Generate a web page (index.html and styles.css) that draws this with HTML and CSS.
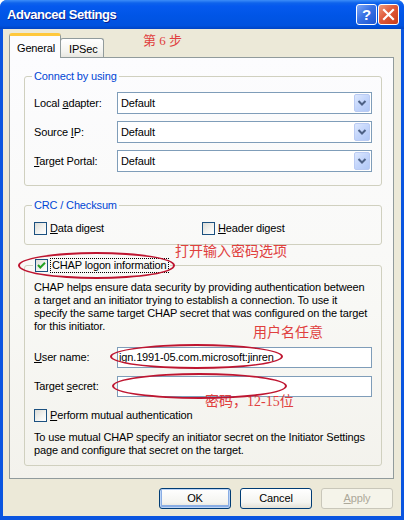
FILE: index.html
```html
<!DOCTYPE html>
<html lang="en">
<head>
<meta charset="utf-8">
<title>Advanced Settings</title>
<link rel="stylesheet" href="styles.css">
</head>
<body>
<div class="window">
  <div class="titlebar">
    <span class="caption">Advanced Settings</span>
    <span class="tb help">?</span>
    <span class="tb close"><svg width="19" height="19" viewBox="0 0 19 19"><path d="M5 5 L14 14 M14 5 L5 14" stroke="#fff" stroke-width="2.2" stroke-linecap="square"/></svg></span>
  </div>

  <div class="client">
    <div class="tabs">
      <div class="tab active">General</div>
      <div class="tab">IPSec</div>
    </div>

    <div class="page">
      <fieldset class="group connect">
        <legend>Connect by using</legend>
        <div class="row">
          <label>Local <u>a</u>dapter:</label>
          <div class="combo"><span>Default</span><i class="drop"><svg width="14" height="16" viewBox="0 0 14 16"><path d="M3.5 6 L7 9.5 L10.5 6" fill="none" stroke="#4D6185" stroke-width="2"/></svg></i></div>
        </div>
        <div class="row">
          <label>Source <u>I</u>P:</label>
          <div class="combo"><span>Default</span><i class="drop"><svg width="14" height="16" viewBox="0 0 14 16"><path d="M3.5 6 L7 9.5 L10.5 6" fill="none" stroke="#4D6185" stroke-width="2"/></svg></i></div>
        </div>
        <div class="row">
          <label><u>T</u>arget Portal:</label>
          <div class="combo"><span>Default</span><i class="drop"><svg width="14" height="16" viewBox="0 0 14 16"><path d="M3.5 6 L7 9.5 L10.5 6" fill="none" stroke="#4D6185" stroke-width="2"/></svg></i></div>
        </div>
      </fieldset>

      <fieldset class="group crc">
        <legend>CRC / Checksum</legend>
        <div class="checks">
          <label class="check"><span class="box"></span><span><u>D</u>ata digest</span></label>
          <label class="check"><span class="box"></span><span><u>H</u>eader digest</span></label>
        </div>
      </fieldset>

      <fieldset class="group chap">
        <legend>
          <label class="check"><span class="box"><svg width="11" height="11" viewBox="0 0 11 11"><path d="M2 5 L4.3 7.5 L9 2.8" fill="none" stroke="#21A121" stroke-width="2"/></svg></span><span class="focus">CHAP logon information</span></label>
        </legend>
        <p class="text">CHAP helps ensure data security by providing authentication between<br>a target and an initiator trying to establish a connection. To use it<br>specify the same target CHAP secret that was configured on the target<br>for this initiator.</p>
        <div class="row user">
          <label><u>U</u>ser name:</label>
          <div class="field">ign.1991-05.com.microsoft:jinren</div>
        </div>
        <div class="row">
          <label>Target <u>s</u>ecret:</label>
          <div class="field"></div>
        </div>
        <label class="check mutual"><span class="box"></span><span><u>P</u>erform mutual authentication</span></label>
        <p class="text after">To use mutual CHAP specify an initiator secret on the Initiator Settings<br>page and configure that secret on the target.</p>
      </fieldset>
    </div>

    <div class="buttons">
      <span class="btn default">OK</span>
      <span class="btn">Cancel</span>
      <span class="btn disabled"><u>A</u>pply</span>
    </div>
  </div>

  <!-- red notes drawn over the dialog -->
  <div class="note note-step">第 6 步</div>
  <div class="note note-chap">打开输入密码选项</div>
  <div class="note note-user">用户名任意</div>
  <div class="note note-pass">密码，12-15位</div>
  <div class="ring ring-chap"></div>
  <div class="ring ring-user"></div>
  <div class="ring ring-secret"></div>
</div>
</body>
</html>
```

FILE: styles.css
```css
* {
  box-sizing: border-box;
  margin: 0;
  padding: 0;
}

body {
  margin: 0;
  width: 404px;
  height: 520px;
  overflow: hidden;
  background: #fff;
  color: #000;
  font: 11px/13px "Liberation Sans", Arial, sans-serif;
  letter-spacing: -0.15px;
}

u {
  text-decoration: underline;
  text-underline-offset: 1px;
}

.window {
  position: relative;
  width: 404px;
  height: 520px;
  display: flex;
  flex-direction: column;
  background: #0A55E0;
  border-radius: 7px 7px 0 0;
}

.titlebar {
  flex: none;
  height: 29px;
  display: flex;
  align-items: center;
  padding: 0 5px 1px 7px;
  border-radius: 7px 7px 0 0;
  background: linear-gradient(#3C8DF8 0, #0E63EC 3px, #0559EE 6px, #0055E6 55%, #0052DF 88%, #0044C4 100%);
}

.caption {
  flex: 1;
  color: #fff;
  font-weight: bold;
  font-size: 13px;
  letter-spacing: -0.45px;
  text-shadow: 1px 1px #0A1F8E;
}

.tb {
  width: 21px;
  height: 21px;
  margin-left: 1px;
  display: flex;
  align-items: center;
  justify-content: center;
  border: 1px solid #fff;
  border-radius: 3px;
  color: #fff;
}

.help {
  font: bold 15px/1 "Liberation Sans", Arial, sans-serif;
  background: linear-gradient(135deg, #7EA8F8 0%, #3A72E4 45%, #1C55D2 100%);
}

.close {
  background: linear-gradient(135deg, #EE9C7E 0%, #E0593A 45%, #C83C19 100%);
}

.client {
  flex: 1;
  display: flex;
  flex-direction: column;
  margin: 0 3px 4px 3px;
  padding: 4px 7px 0 6px;
  background: #ECE9D8;
}

.tabs {
  flex: none;
  height: 25px;
  display: flex;
  align-items: flex-end;
  margin-bottom: -1px;
  position: relative;
  z-index: 1;
}

.tab {
  height: 19px;
  width: 44px;
  margin-bottom: 1px;
  margin-left: -1px;
  padding: 4px 0 0 8px;
  border: 1px solid #919B9C;
  border-bottom: 0;
  border-radius: 3px 3px 0 0;
  background: linear-gradient(#FFFFFF, #F3F3EF 70%, #E8E7E0);
}

.tab.active {
  height: 25px;
  width: 52px;
  margin: 0;
  padding: 6px 0 0 7px;
  border-top: 3px solid #FFC83C;
  background: #FCFCFE;
}

.page {
  flex: none;
  height: 422px;
  padding: 12px 11px 0 14px;
  border: 1px solid #919B9C;
  background: linear-gradient(#FCFCFE, #F8F8F5 60%, #F3F2EC);
}

.group {
  border: 1px solid #D0D0BF;
  border-radius: 3px;
  padding: 9px 9px 13px 9px;
  min-width: 0;
}

.group legend {
  color: #0046D5;
  line-height: 13px;
  padding: 0 2px;
  margin-left: -2px;
}

.crc {
  margin-top: 13px;
  padding-top: 10px;
  padding-bottom: 9px;
}

.chap {
  margin-top: 14px;
  padding-top: 9px;
  padding-bottom: 8px;
}

.chap legend {
  color: #000;
  margin-left: -1px;
}

.row {
  display: flex;
  align-items: center;
  margin-top: 7px;
}

.row:first-of-type {
  margin-top: 0;
}

.row label {
  width: 83px;
  flex: none;
}

.combo {
  flex: 1;
  height: 22px;
  display: flex;
  align-items: center;
  padding-left: 3px;
  border: 1px solid #7F9DB9;
  background: #fff;
}

.drop {
  margin-left: auto;
  margin-right: 1px;
  width: 16px;
  height: 18px;
  display: flex;
  align-items: center;
  justify-content: center;
  border: 1px solid #BACBF3;
  border-radius: 2px;
  background: linear-gradient(135deg, #DDE8FE 0%, #C3D5FB 50%, #B1C8F6 100%);
}

.field {
  flex: 1;
  height: 21px;
  line-height: 19px;
  padding-left: 1px;
  border: 1px solid #7F9DB9;
  background: #fff;
}

.chap .row.user {
  margin-top: 14px;
}

.chap .row + .row {
  margin-top: 8px;
}

.checks {
  display: grid;
  grid-template-columns: 168px auto;
}

.check {
  display: flex;
  align-items: center;
  gap: 3px;
}

.box {
  width: 13px;
  height: 13px;
  flex: none;
  display: flex;
  align-items: center;
  justify-content: center;
  border: 1px solid #1C5180;
  background: linear-gradient(135deg, #DCDCD7 0%, #F4F4F1 60%, #FFFFFF 100%);
}

.focus {
  outline: 1px dotted #000;
  padding: 0 1px;
}

.text {
  margin-top: 0;
}

.mutual {
  margin-top: 12px;
}

.text.after {
  margin-top: 9px;
}

.buttons {
  display: flex;
  justify-content: flex-end;
  gap: 9px;
  margin-top: 9px;
  padding-right: 1px;
}

.btn {
  width: 72px;
  height: 21px;
  display: flex;
  align-items: center;
  justify-content: center;
  border: 1px solid #003C74;
  border-radius: 3px;
  background: linear-gradient(#FFFFFF, #F4F4F0 70%, #E3E0D6);
}

.btn.default {
  box-shadow: inset 0 0 0 1px #BCD4F6, inset 0 -1px 0 2px #89ADE4;
}

.btn.disabled {
  color: #ACA899;
  border-color: #C9C7BA;
  background: #F5F4EA;
}

.note {
  position: absolute;
  color: #E0403E;
  font: 14px/14px "Liberation Serif", "Noto Sans CJK SC", serif;
  letter-spacing: 0;
  white-space: nowrap;
}

.note-step {
  left: 143px;
  top: 34px;
  font-size: 13px;
}

.note-chap {
  left: 175px;
  top: 245px;
}

.note-user {
  left: 253px;
  top: 326px;
}

.note-pass {
  left: 205px;
  top: 395px;
}

.ring {
  position: absolute;
  border: 2px solid #BE1530;
  border-radius: 50%;
}

.ring-chap {
  left: 18px;
  top: 252px;
  width: 157px;
  height: 27px;
}

.ring-user {
  left: 110px;
  top: 344px;
  width: 173px;
  height: 25px;
}

.ring-secret {
  left: 112px;
  top: 373px;
  width: 175px;
  height: 26px;
}
```
